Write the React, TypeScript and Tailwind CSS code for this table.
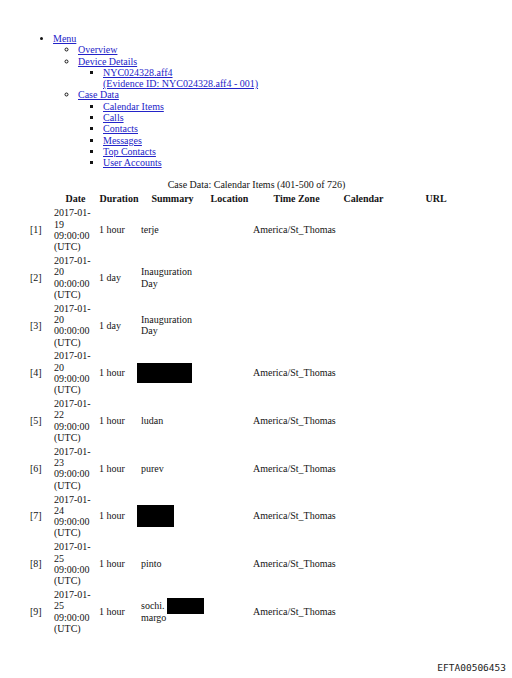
const link = "text-[#2323c8] underline";

type Row = {
  n: number;
  date: string[];
  duration: string;
  summary: React.ReactNode;
  tz?: string;
};

const Redact = ({ w, h, cls = "" }: { w: string; h: string; cls?: string }) => (
  <span className={`inline-block bg-black align-middle ${w} ${h} ${cls}`} />
);

const rows: Row[] = [
  { n: 1, date: ["2017-01-", "19", "09:00:00", "(UTC)"], duration: "1 hour", summary: "terje", tz: "America/St_Thomas" },
  { n: 2, date: ["2017-01-", "20", "00:00:00", "(UTC)"], duration: "1 day", summary: <>Inauguration<br />Day</> },
  { n: 3, date: ["2017-01-", "20", "00:00:00", "(UTC)"], duration: "1 day", summary: <>Inauguration<br />Day</> },
  { n: 4, date: ["2017-01-", "20", "09:00:00", "(UTC)"], duration: "1 hour", summary: <Redact w="w-[55px]" h="h-[20px]" cls="-ml-[4px]" />, tz: "America/St_Thomas" },
  { n: 5, date: ["2017-01-", "22", "09:00:00", "(UTC)"], duration: "1 hour", summary: "ludan", tz: "America/St_Thomas" },
  { n: 6, date: ["2017-01-", "23", "09:00:00", "(UTC)"], duration: "1 hour", summary: "purev", tz: "America/St_Thomas" },
  { n: 7, date: ["2017-01-", "24", "09:00:00", "(UTC)"], duration: "1 hour", summary: <Redact w="w-[37px]" h="h-[22px]" cls="-ml-[4px]" />, tz: "America/St_Thomas" },
  { n: 8, date: ["2017-01-", "25", "09:00:00", "(UTC)"], duration: "1 hour", summary: "pinto", tz: "America/St_Thomas" },
  {
    n: 9,
    date: ["2017-01-", "25", "09:00:00", "(UTC)"],
    duration: "1 hour",
    summary: (
      <>
        <span className="whitespace-nowrap">
          sochi.<Redact w="w-[37px]" h="h-[16px]" cls="ml-[2px] -my-[2.5px]" />
        </span>
        <br />
        margo
      </>
    ),
    tz: "America/St_Thomas",
  },
];

export default function App() {
  return (
    <div className="h-[678px] flex flex-col bg-white text-[#141414] font-['Liberation_Serif',serif] text-[10px] leading-[11.3px]">
      <ul className="list-disc pl-[53px] pt-[33px] mb-[10px]">
        <li>
          <a className={link}>Menu</a>
          <ul className="list-[circle] pl-[25px]">
            <li><a className={link}>Overview</a></li>
            <li>
              <a className={link}>Device Details</a>
              <ul className="list-[square] pl-[25px]">
                <li>
                  <a className={link}>NYC024328.aff4<br />(Evidence ID: NYC024328.aff4 - 001)</a>
                </li>
              </ul>
            </li>
            <li>
              <a className={link}>Case Data</a>
              <ul className="list-[square] pl-[25px]">
                <li><a className={link}>Calendar Items</a></li>
                <li><a className={link}>Calls</a></li>
                <li><a className={link}>Contacts</a></li>
                <li><a className={link}>Messages</a></li>
                <li><a className={link}>Top Contacts</a></li>
                <li><a className={link}>User Accounts</a></li>
              </ul>
            </li>
          </ul>
        </li>
      </ul>

      <table className="ml-[28px] w-[457px] table-fixed border-collapse">
        <caption className="text-center pb-[1px]">Case Data: Calendar Items (401-500 of 726)</caption>
        <colgroup>
          <col className="w-[24px]" />
          <col className="w-[45px]" />
          <col className="w-[42px]" />
          <col className="w-[65px]" />
          <col className="w-[47px]" />
          <col className="w-[89px]" />
          <col className="w-[45px]" />
          <col className="w-[100px]" />
        </colgroup>
        <thead>
          <tr className="font-bold">
            <th className="py-[2px]"></th>
            <th className="py-[2px] pl-[2px] text-center">Date</th>
            <th className="py-[2px] pl-[2px] text-center">Duration</th>
            <th className="py-[2px] pl-[2px] text-center">Summary</th>
            <th className="py-[2px] pl-[4px] text-center">Location</th>
            <th className="py-[2px] pl-[2px] text-center">Time Zone</th>
            <th className="py-[2px] pl-[2px] text-center">Calendar</th>
            <th className="py-[2px] pl-[2px] text-center">URL</th>
          </tr>
        </thead>
        <tbody>
          {rows.map((r) => (
            <tr key={r.n} className="align-middle">
              <td className="py-[1.25px] pl-[2px]">[{r.n}]</td>
              <td className="py-[1.25px] pl-[2px]">
                {r.date.map((d, i) => (
                  <div key={i}>{d}</div>
                ))}
              </td>
              <td className="py-[1.25px] pl-[2px]">{r.duration}</td>
              <td className="py-[1.25px] pl-[2px]">{r.summary}</td>
              <td className="py-[1.25px] pl-[2px]"></td>
              <td className="py-[1.25px] pl-[2px] whitespace-nowrap">{r.tz ?? ""}</td>
              <td className="py-[1.25px] pl-[2px]"></td>
              <td className="py-[1.25px] pl-[2px]"></td>
            </tr>
          ))}
        </tbody>
      </table>

      <div className="mt-auto pb-[4px] pr-[6px] text-right font-['DejaVu_Sans_Mono',monospace] text-[9.5px] leading-[12px] text-[#222]">
        EFTA00506453
      </div>
    </div>
  );
}
